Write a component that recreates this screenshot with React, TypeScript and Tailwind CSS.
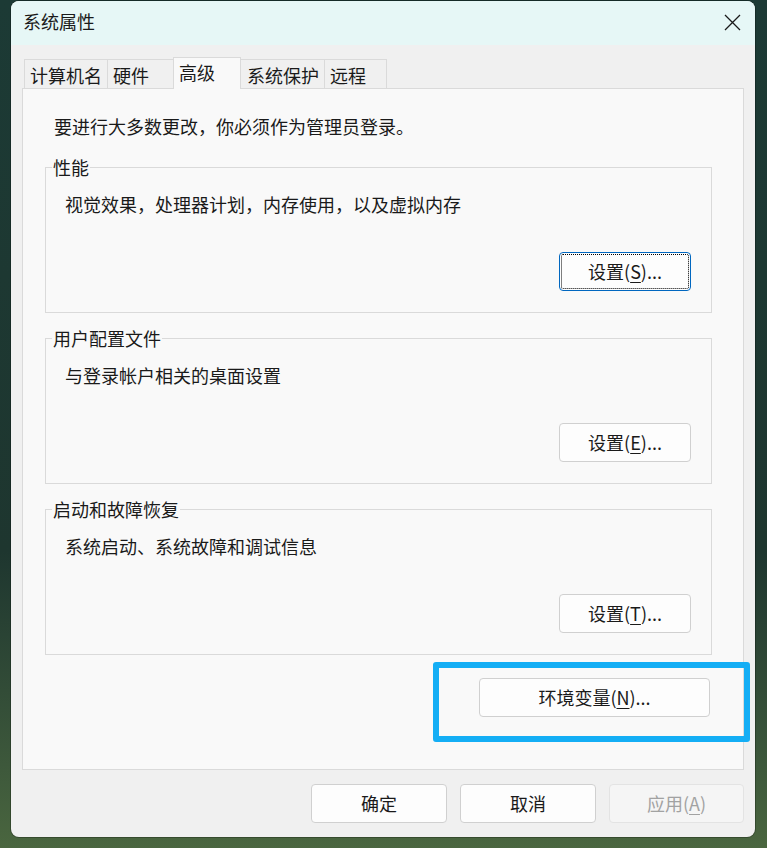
import React from "react";

const FONT = "[font-family:'Noto_Sans_CJK_SC','Noto_Sans',sans-serif]";

function Mn({ ch }: { ch: string }) {
  return <span className="underline decoration-1 underline-offset-[3px]">{ch}</span>;
}

interface BtnProps {
  children: React.ReactNode;
  width: string;
  focused?: boolean;
  disabled?: boolean;
}

function WinButton({ children, width, focused, disabled }: BtnProps) {
  let look = "border-[#d0d0d0] bg-[#fdfdfd] text-[#1a1a1a]";
  if (focused) look = "border-[#0067c0] bg-[#fdfdfd] text-[#1a1a1a] outline-1 outline-dotted outline-black [outline-offset:-3px]";
  if (disabled) look = "border-[#e3e3e3] bg-[#f5f5f5] text-[#a2a2a2]";
  return (
    <div
      className={`flex h-[39px] items-center justify-center rounded-[4px] border pb-[2px] text-[18px] leading-[24px] ${width} ${look}`}
    >
      {children}
    </div>
  );
}

function Group({
  title,
  desc,
  button,
  focused,
  first,
}: {
  title: string;
  desc: string;
  button: React.ReactNode;
  focused?: boolean;
  first?: boolean;
}) {
  return (
    <fieldset
      className={`border border-[#dadada] px-[6px] pb-[21px] ${first ? "mt-[17px]" : "mt-[13px]"}`}
    >
      <legend className="px-[1px] text-[18px] leading-[24px]">{title}</legend>
      <p className="mt-[13px] pl-[13px] text-[18px] leading-[24px]">{desc}</p>
      <div className="mt-[36px] mr-[14px] flex justify-end">
        <WinButton width="w-[132px]" focused={focused}>
          {button}
        </WinButton>
      </div>
    </fieldset>
  );
}

const TABS = [
  { label: "计算机名", w: "w-[83px]", active: false },
  { label: "硬件", w: "w-[66px]", active: false },
  { label: "高级", w: "w-[68px]", active: true },
  { label: "系统保护", w: "w-[83px]", active: false },
  { label: "远程", w: "w-[63px]", active: false },
];

export default function App() {
  return (
    <div
      className={`relative h-[848px] w-[767px] overflow-hidden bg-linear-to-b from-[#1c3a35] via-[#1e362f] via-65% to-[#4a663f] pt-px pl-[11px] text-[#1a1a1a] ${FONT}`}
    >
      <div className="flex h-[836px] w-[744px] flex-col overflow-hidden rounded-lg bg-[#f0f0f0] shadow-[0_0_0_1px_rgba(0,0,0,0.25)]">
        {/* title bar */}
        <div className="flex h-[44px] items-center justify-between bg-[#e6f7f6] pl-[12px]">
          <span className="pb-[4px] text-[18px] leading-[24px]">系统属性</span>
          <div className="flex h-[44px] w-[46px] items-center justify-center pb-[2px]">
            <svg width="17" height="17" viewBox="0 0 17 17">
              <path d="M1 1L16 16M16 1L1 16" stroke="#1a1a1a" strokeWidth="1.3" fill="none" />
            </svg>
          </div>
        </div>

        <div className="flex flex-1 flex-col px-[11px] pt-[12px]">
          {/* tabs */}
          <div className="flex h-[31px] items-end pl-[2px]">
            {TABS.map((t, i) => (
              <div
                key={t.label}
                className={`relative z-10 flex items-start border-t border-l border-[#dadada] pl-[5px] text-[18px] leading-[24px] ${t.w} ${
                  t.active
                    ? "-mb-px h-[32px] border-r bg-[#f9f9f9] pt-[2px]"
                    : "h-[29px] bg-[#f0f0f0] pt-[3px]"
                } ${i === 3 ? "border-l-0 pl-[6px]" : ""} ${i === 4 ? "border-r" : ""}`}
              >
                {t.label}
              </div>
            ))}
          </div>

          {/* panel */}
          <div className="flex h-[682px] flex-col border border-[#dadada] bg-[#f9f9f9] pt-[25px] pr-[31px] pl-[22px]">
            <p className="pl-[9px] text-[18px] leading-[24px]">要进行大多数更改，你必须作为管理员登录。</p>
            <Group
              first
              focused
              title="性能"
              desc="视觉效果，处理器计划，内存使用，以及虚拟内存"
              button={
                <>
                  设置(<Mn ch="S" />)...
                </>
              }
            />
            <Group
              title="用户配置文件"
              desc="与登录帐户相关的桌面设置"
              button={
                <>
                  设置(<Mn ch="E" />)...
                </>
              }
            />
            <Group
              title="启动和故障恢复"
              desc="系统启动、系统故障和调试信息"
              button={
                <>
                  设置(<Mn ch="T" />)...
                </>
              }
            />
            <div className="mt-[23px] mr-[2px] flex justify-end">
              <WinButton width="w-[231px]">
                环境变量(<Mn ch="N" />)...
              </WinButton>
            </div>
          </div>

          {/* dialog buttons */}
          <div className="mt-[14px] flex justify-end gap-[13px]">
            <WinButton width="w-[136px]">确定</WinButton>
            <WinButton width="w-[136px]">取消</WinButton>
            <WinButton width="w-[135px]" disabled>
              应用(<Mn ch="A" />)
            </WinButton>
          </div>
        </div>
      </div>

      {/* annotation highlight */}
      <div className="absolute top-[662px] left-[433px] h-[80px] w-[317px] rounded-[3px] border-[6px] border-[#14aef5]" />
    </div>
  );
}
